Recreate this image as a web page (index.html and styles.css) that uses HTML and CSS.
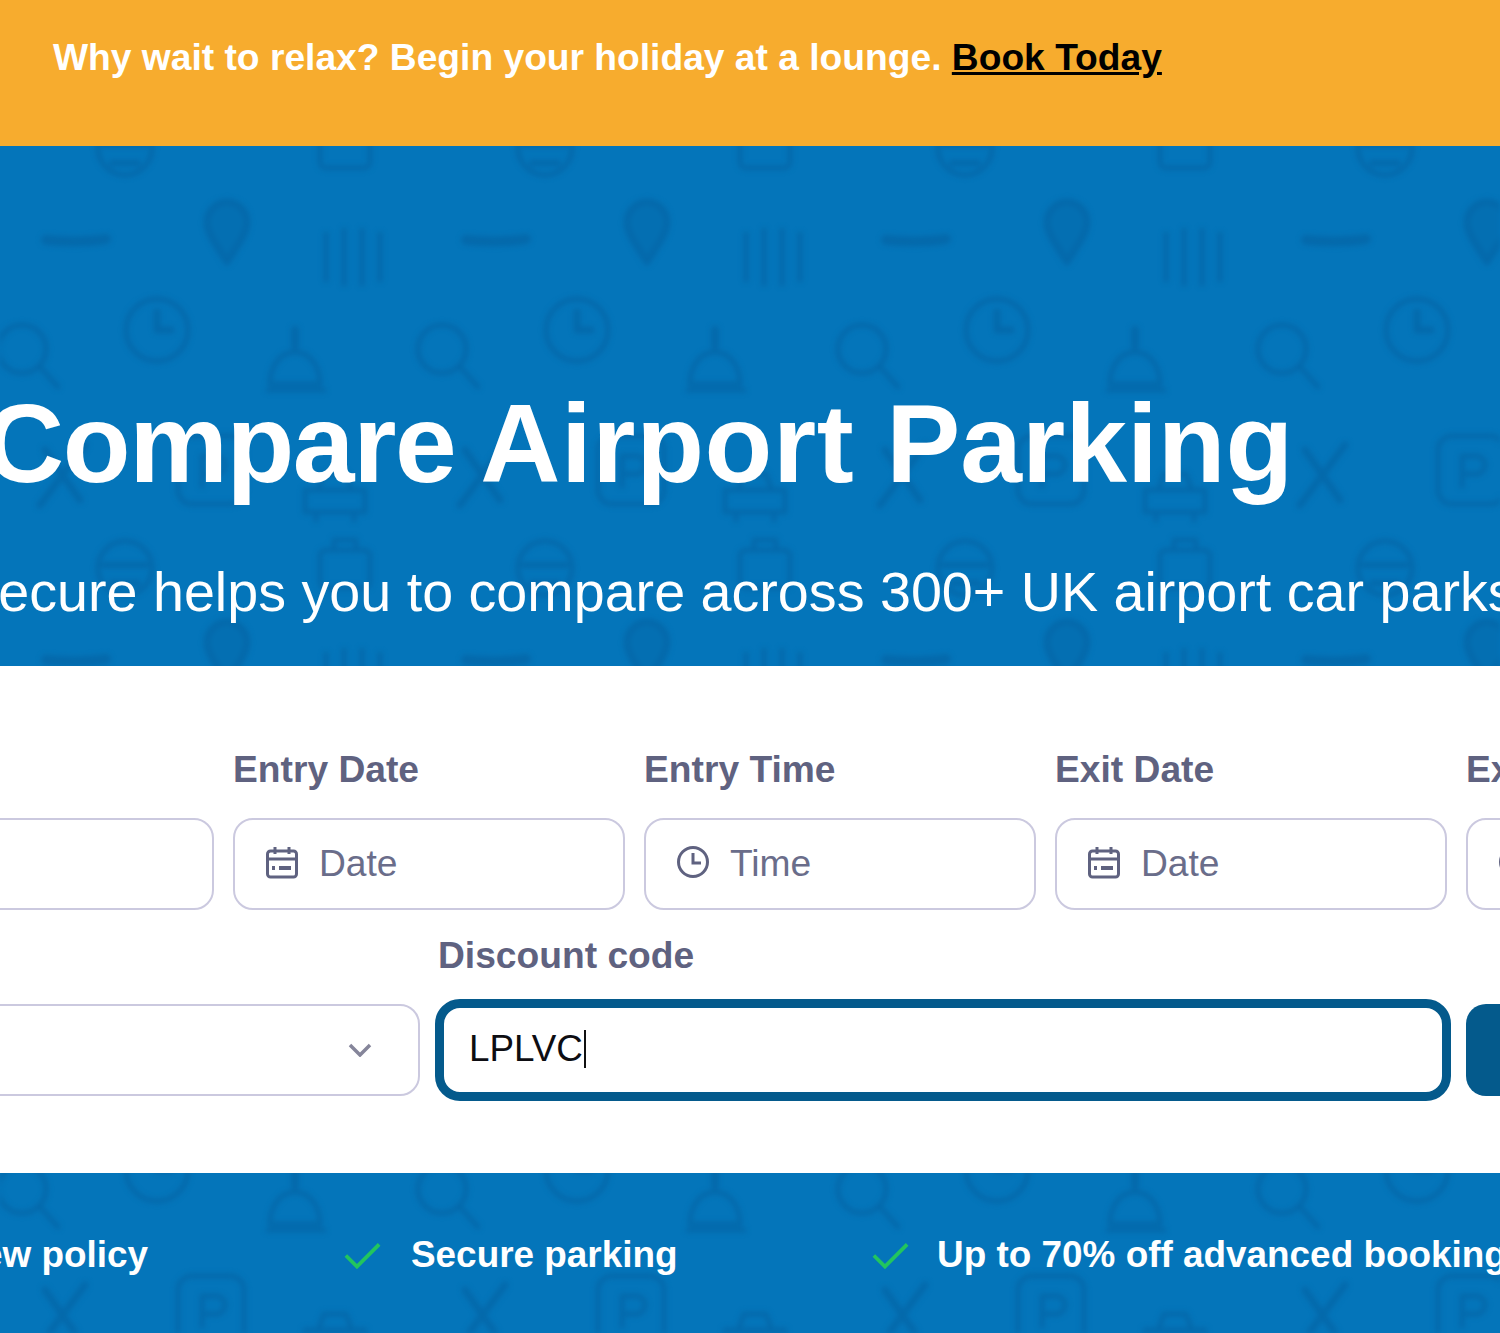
FILE: index.html
```html
<!DOCTYPE html>
<html>
  <head>
    <meta charset="UTF-8">
    <title>Compare Airport Parking</title>
    <link rel="stylesheet" href="styles.css">
  </head>
  <body>
    <div class="page">
      <svg class="pattern" width="1500" height="1333" aria-hidden="true">
        <defs>
          <pattern id="tile" width="420" height="420" patternUnits="userSpaceOnUse">
            <g fill="none" stroke="#0469AB" stroke-width="5" stroke-linecap="round" stroke-linejoin="round">
              <!-- pin -->
              <path d="M227 262c-10-16-20-28-20-40a20 20 0 0 1 40 0c0 12-10 24-20 40z" fill="#046FB2" stroke-width="7"/>
              <!-- wings -->
              <path d="M46 240c18 2 44 2 60-1" stroke-width="10"/>
              <!-- building -->
              <path d="M326 280v-46M344 284v-54M362 284v-54M380 280v-46" stroke-width="5"/>
              <!-- clock -->
              <circle cx="157" cy="330" r="31"/>
              <path d="M157 312v18h14" stroke-width="7"/>
              <!-- magnifier -->
              <circle cx="22" cy="349" r="24"/>
              <path d="M40 367l18 20"/>
              <circle cx="442" cy="349" r="24"/>
              <path d="M-380 367l-20 22"/>
              <!-- bell -->
              <path d="M295 330v16" stroke-width="8"/>
              <path d="M270 384c0-20 12-32 25-32s25 12 25 32zM268 390h56"/>
              <!-- P square -->
              <rect x="178" y="16" width="66" height="68" rx="14"/>
              <path d="M202 66V36h14a9 9 0 0 1 0 18h-14"/>
              <!-- plane -->
              <path d="M45 30l35 50M85 25L40 85" stroke-width="7"/>
              <!-- car -->
              <path d="M305 70h60v22h-60zM318 70l6-16h22l6 16M316 92v8M354 92v8"/>
              <!-- wheel -->
              <circle cx="125" cy="148" r="27"/>
              <path d="M104 145h42M112 163h26" stroke-width="6"/>
              <!-- suitcase -->
              <rect x="320" y="130" width="50" height="38" rx="6"/>
              <path d="M334 130v-10h22v10"/>
            </g>
          </pattern>
        </defs>
        <rect class="pattern-fill" width="1500" height="1333" fill="url(#tile)"/>
      </svg>

      <div class="banner">
        Why wait to relax? Begin your holiday at a lounge. <a href="#">Book Today</a>
      </div>

      <section class="hero">
        <h1><span class="w1">Compare</span> <span class="w2">Airport</span> <span class="w3">Parking</span></h1>
        <p>Parksecure helps you to compare across 300+ UK airport car parks</p>
      </section>

      <form class="search">
        <div class="row-top">
          <div class="field">
            <label>Airport</label>
            <div class="box"></div>
          </div>
          <div class="field">
            <label>Entry Date</label>
            <div class="box">
              <svg class="ico" viewBox="0 0 34 34"><use href="#cal"/></svg>
              <span>Date</span>
            </div>
          </div>
          <div class="field">
            <label>Entry Time</label>
            <div class="box">
              <svg class="ico" viewBox="0 0 34 34"><use href="#clk"/></svg>
              <span>Time</span>
            </div>
          </div>
          <div class="field">
            <label>Exit Date</label>
            <div class="box">
              <svg class="ico" viewBox="0 0 34 34"><use href="#cal"/></svg>
              <span>Date</span>
            </div>
          </div>
          <div class="field">
            <label>Exit Time</label>
            <div class="box">
              <svg class="ico" viewBox="0 0 34 34"><use href="#clk"/></svg>
              <span>Time</span>
            </div>
          </div>
        </div>
        <div class="row-bottom">
          <div class="field">
            <label>Terminal</label>
            <div class="box select">
              <svg class="chevron" viewBox="0 0 24 14"><path d="M2 2l10 10L22 2"/></svg>
            </div>
          </div>
          <div class="field discount">
            <label>Discount code</label>
            <div class="box code">LPLVC<i class="caret"></i></div>
          </div>
          <div class="field">
            <label class="blank">&nbsp;</label>
            <button type="button" class="go">Search</button>
          </div>
        </div>
      </form>

      <ul class="perks">
        <li><svg class="tick" viewBox="0 0 40 28"><path d="M2 14l12 12L38 2"/></svg>Review policy</li>
        <li><svg class="tick" viewBox="0 0 40 28"><path d="M2 14l12 12L38 2"/></svg>Secure parking</li>
        <li><svg class="tick" viewBox="0 0 40 28"><path d="M2 14l12 12L38 2"/></svg>Up to 70% off advanced bookings</li>
      </ul>

      <svg width="0" height="0" class="defs" aria-hidden="true">
        <symbol id="cal" viewBox="0 0 34 34">
          <g fill="none" stroke="#5F6280" stroke-width="3">
            <rect x="2.5" y="6" width="29" height="26" rx="3"/>
            <path d="M2.5 14h29M10 2v7M24 2v7"/>
            <path d="M7 23h3M14 23h12" stroke-width="4"/>
          </g>
        </symbol>
        <symbol id="clk" viewBox="0 0 34 34">
          <g fill="none" stroke="#5F6280" stroke-width="3">
            <circle cx="17" cy="17" r="14.5"/>
            <path d="M17 8v10h8"/>
          </g>
        </symbol>
      </svg>
    </div>
  </body>
</html>
```

FILE: styles.css
```css
* { margin: 0; padding: 0; box-sizing: border-box; }
html, body { width: 1500px; height: 1333px; overflow: hidden; }
body { font-family: "Liberation Sans", Arial, sans-serif; font-size: 37.2px; background: #fff; }

.page { position: relative; width: 1500px; height: 1333px; overflow: hidden; background: #0475BA; color: #fff; }
.pattern { position: absolute; top: 0; left: 0; }
.pattern-fill { filter: blur(2.5px); }
.defs { position: absolute; }

.banner { position: relative; height: 146px; padding: 35px 0 0 53px; line-height: 44px; font-weight: bold; background: #F7AC2E; white-space: nowrap; }
.banner a { color: #000; }

.hero { position: relative; height: 520px; padding-top: 238px; white-space: nowrap; }
.hero h1 { margin-left: -16px; font-size: 111px; line-height: 120px; font-weight: bold; }
.w1 { margin-right: -6px; letter-spacing: -1.4px; }
.w2 { margin-right: 1px; letter-spacing: .6px; }
.hero p { margin: 56px 0 0 -144px; font-size: 55.67px; line-height: 64px; }

.search { position: relative; width: 2035px; height: 507px; margin-left: -178px; padding-top: 83px; color: #5F6280; }
.search::before { content: ""; position: absolute; top: 0; left: 0; right: 0; bottom: 0; background: #fff; }
.row-top, .row-bottom { position: relative; display: grid; }
.row-top { grid-template-columns: repeat(5, 391.5px); column-gap: 19.5px; }
.row-bottom { grid-template-columns: 598px 1006px 391px; column-gap: 20px; margin-top: 25px; }

.field label { display: block; height: 42px; margin-bottom: 27px; line-height: 40px; font-weight: bold; white-space: nowrap; }
.discount label { margin-left: -2px; }
.box { display: flex; align-items: center; gap: 20px; height: 92px; padding: 0 30px 2px; border: 2px solid #CBC9DF; border-radius: 20px; background: #fff; color: #6A6D8A; white-space: nowrap; }
.ico { width: 34px; height: 34px; flex: none; margin-bottom: 3px; }

.select { justify-content: flex-end; padding-right: 46px; padding-bottom: 0; }
.chevron { width: 24px; height: 14px; fill: none; stroke: #85859A; stroke-width: 3.5; }

.code { gap: 0; padding-left: 29px; font-size: 36.8px; color: #0D0D12; border: 0; outline: 9px solid #045A8C; outline-offset: -4px; }
.caret { width: 2px; height: 38px; margin-left: 1px; background: #111; }

.go { display: block; width: 391px; height: 92px; border: 0; border-radius: 20px; background: #045A8C; color: #fff; font: bold 37.2px "Liberation Sans", Arial, sans-serif; }

.perks { position: relative; display: flex; gap: 196px; height: 160px; margin-left: -163px; padding-top: 60px; list-style: none; font-size: 36.9px; font-weight: bold; line-height: 44px; white-space: nowrap; }
.perks li { display: flex; align-items: center; gap: 30px; height: 44px; }
.perks li:last-child { gap: 28.5px; margin-left: -2px; }
.tick { width: 37px; height: 27px; flex: none; fill: none; stroke: #22C55E; stroke-width: 4; }
```
